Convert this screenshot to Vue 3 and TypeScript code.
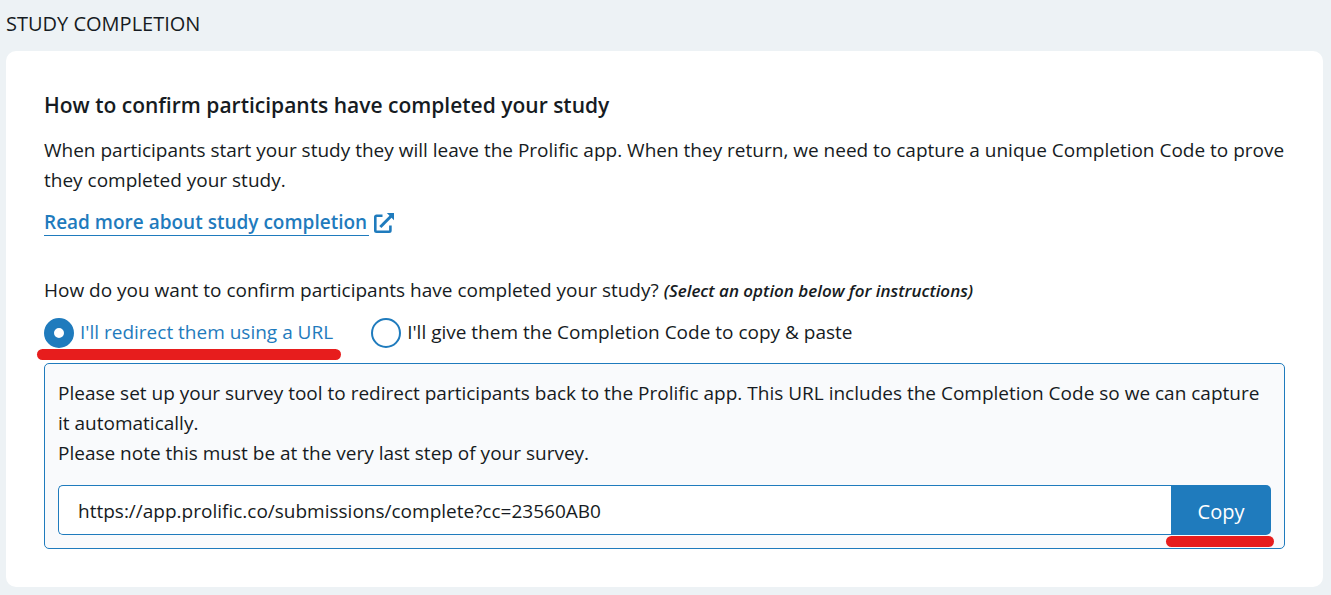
<script setup lang="ts">
import { ref } from 'vue'

const method = ref<'url' | 'code'>('url')
const completionUrl = ref('https://app.prolific.co/submissions/complete?cc=23560AB0')

function copyUrl(): void {
  void navigator.clipboard?.writeText(completionUrl.value)
}
</script>

<template>
  <main class="page">
    <h1 class="section-title">STUDY COMPLETION</h1>
    <section class="card">
      <h2 class="heading">How to confirm participants have completed your study</h2>
      <p class="intro">
        When participants start your study they will leave the Prolific app. When they return, we need to capture a unique Completion Code to prove they completed your study.
      </p>
      <a class="more" href="#study-completion">
        <span class="more-text">Read more about study completion</span>
        <svg class="external" viewBox="0 0 20 20" aria-hidden="true">
          <path d="M8.5 2.8H2.5Q1.3 2.8 1.3 4V17.5Q1.3 18.7 2.5 18.7H15.2Q16.4 18.7 16.4 17.5V12.5" fill="none" stroke="currentColor" stroke-width="2.6" />
          <path d="M6.3 14L17 3.2" fill="none" stroke="currentColor" stroke-width="3" />
          <path d="M12.8 0H20V7.2Z" fill="currentColor" />
        </svg>
      </a>
      <fieldset class="choices">
        <legend class="question">
          How do you want to confirm participants have completed your study?
          <em class="hint">(Select an option below for instructions)</em>
        </legend>
        <div class="options">
          <label class="option marked" :class="{ selected: method === 'url' }" for="method-url">
            <input id="method-url" v-model="method" class="radio" type="radio" name="method" value="url" />
            <span>I'll redirect them using a URL</span>
          </label>
          <label class="option" :class="{ selected: method === 'code' }" for="method-code">
            <input id="method-code" v-model="method" class="radio" type="radio" name="method" value="code" />
            <span>I'll give them the Completion Code to copy &amp; paste</span>
          </label>
        </div>
      </fieldset>
      <div class="panel">
        <p>
          Please set up your survey tool to redirect participants back to the Prolific app. This URL includes the Completion Code so we can capture it automatically.
        </p>
        <p>Please note this must be at the very last step of your survey.</p>
        <div class="copy-row">
          <input v-model="completionUrl" class="url" type="text" aria-label="Completion URL" readonly />
          <div class="copy-wrap">
            <button class="copy" type="button" @click="copyUrl">Copy</button>
          </div>
        </div>
      </div>
    </section>
  </main>
</template>

<style>
body {
  background: #edf2f5;
}
</style>

<style scoped>
.page {
  box-sizing: border-box;
  min-height: 100vh;
  padding: 9px 8px 8px 6px;
  background: #edf2f5;
  color: #161b22;
  font-family: "Segoe UI", "Open Sans", "Noto Sans", sans-serif;
  font-size: 19px;
  line-height: 30px;
}

.section-title {
  margin: 0 0 12px;
  font-size: 20px;
  font-weight: 400;
  line-height: 30px;
}

.card {
  padding: 39px 38px 38px;
  border-radius: 10px;
  background: #fff;
}

.heading {
  margin: 0 0 15px;
  font-size: 21px;
  font-weight: 600;
  line-height: 30px;
}

.intro,
.panel p {
  margin: 0;
}

.more {
  display: flex;
  align-items: center;
  gap: 5px;
  width: fit-content;
  margin-top: 14px;
  color: #1f7bbd;
  font-weight: 600;
  line-height: 26px;
  text-decoration: none;
}

.more-text {
  padding-right: 2px;
  border-bottom: 1px solid #1f7bbd;
}

.external {
  width: 20px;
  height: 20px;
}

.choices {
  min-width: 0;
  margin: 39px 0 0;
  padding: 0;
  border: 0;
}

.question {
  padding: 0;
}

.hint {
  font-size: 17px;
  font-weight: 600;
}

.options {
  display: flex;
  gap: 38px;
  padding-top: 12px;
}

.option {
  position: relative;
  display: flex;
  align-items: center;
  gap: 6px;
  line-height: 28px;
}

.option span {
  padding-bottom: 2px;
}

.selected {
  color: #1f7bbd;
}

.radio {
  box-sizing: border-box;
  flex: none;
  width: 30px;
  height: 30px;
  margin: 0;
  border: 2px solid #1f7bbd;
  border-radius: 50%;
  background: #fff;
  appearance: none;
}

.radio:checked {
  border-width: 10px;
}

.marked::after,
.copy-wrap::after {
  position: absolute;
  height: 11px;
  border-radius: 6px;
  background: #e71d1d;
  content: "";
}

.marked::after {
  top: 31px;
  right: -8px;
  left: -7px;
}

.panel {
  margin-top: 15px;
  padding: 14px 13px 13px;
  border: 1px solid #1f7bbd;
  border-radius: 5px;
  background: #f9fafc;
}

.copy-row {
  display: flex;
  margin-top: 17px;
}

.url {
  box-sizing: border-box;
  flex: 1;
  min-width: 0;
  height: 50px;
  padding: 1px 19px 0;
  border: 1px solid #1f7bbd;
  border-right: 0;
  border-radius: 5px 0 0 5px;
  outline: 0;
  background: #fff;
  color: inherit;
  font: inherit;
}

.copy-wrap {
  position: relative;
  width: 100px;
}

.copy {
  width: 100%;
  height: 50px;
  padding: 3px 0 0;
  border: 0;
  border-radius: 0 5px 5px 0;
  background: #1f7bbd;
  color: #fff;
  font: inherit;
  font-size: 20px;
}

.copy-wrap::after {
  top: 51px;
  right: -3px;
  left: -5px;
}
</style>
